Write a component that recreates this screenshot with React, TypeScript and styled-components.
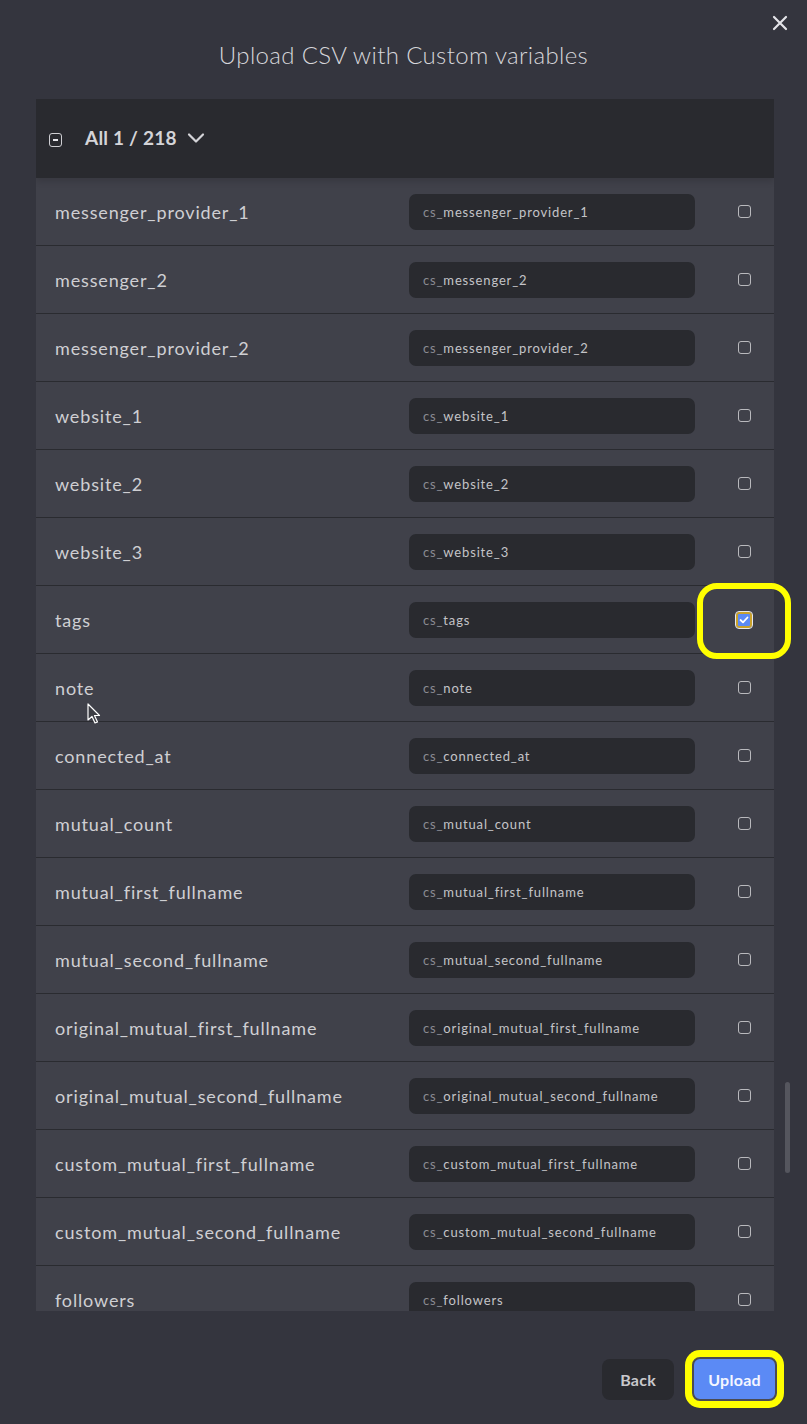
import { createGlobalStyle } from 'styled-components';
import styled from 'styled-components';

const GlobalStyle = createGlobalStyle`
  html, body {
    margin: 0;
    background: #34353e;
  }
  * {
    box-sizing: border-box;
  }
`;

const Modal = styled.div`
  position: relative;
  width: 807px;
  height: 1424px;
  background: #34353e;
  font-family: 'Lato', 'Open Sans', sans-serif;
  display: flex;
  flex-direction: column;
  overflow: hidden;
`;

const CloseButton = styled.button`
  position: absolute;
  top: 12px;
  right: 16px;
  width: 22px;
  height: 22px;
  padding: 0;
  border: none;
  background: transparent;
  cursor: pointer;
  display: flex;
  align-items: center;
  justify-content: center;
`;

const Title = styled.h1`
  margin: 0;
  padding-top: 40px;
  height: 99px;
  text-align: center;
  font-size: 24px;
  font-weight: 300;
  color: #d6d6da;
  letter-spacing: 0.35px;
`;

const Body = styled.div`
  display: flex;
  padding-left: 36px;
`;

const Table = styled.div`
  width: 738px;
  height: 1212px;
  overflow: hidden;
  display: flex;
  flex-direction: column;
`;

const Header = styled.div`
  flex: 0 0 79px;
  background: #292a2f;
  display: flex;
  align-items: center;
  padding-left: 13px;
  padding-bottom: 3px;
  gap: 10px;
  box-shadow: 0 4px 6px rgba(0, 0, 0, 0.12);
  position: relative;
  z-index: 1;
`;

const HeaderLabel = styled.span`
  font-size: 19px;
  font-weight: 700;
  color: #d4d4d8;
  margin-left: 13px;
  letter-spacing: 0.2px;
`;

const MinusBox = styled.span`
  width: 13px;
  height: 14px;
  border: 1.5px solid #cfcfd3;
  border-radius: 3px;
  display: flex;
  align-items: center;
  justify-content: center;
  margin-top: 5px;

  &::after {
    content: '';
    width: 5px;
    height: 2px;
    background: #e6e6ea;
  }
`;

const Row = styled.div`
  flex: 0 0 68px;
  display: grid;
  grid-template-columns: 354px 286px 1fr;
  align-items: center;
  padding-left: 19px;
  background: #40414a;
  border-bottom: 1px solid #2a2b30;
`;

const Label = styled.span`
  font-size: 18px;
  color: #cfcfd3;
  letter-spacing: 0.85px;
  white-space: nowrap;
`;

const Field = styled.div`
  height: 36px;
  border-radius: 7px;
  background: #292a2f;
  display: flex;
  align-items: center;
  padding-left: 14px;
  font-size: 13px;
  color: #c4c4c8;
  letter-spacing: 0.85px;
  white-space: nowrap;
  overflow: hidden;
`;

const Prefix = styled.span`
  color: #8a8b92;
`;

const CheckCell = styled.div`
  display: flex;
  justify-content: flex-end;
  padding-right: 23px;
`;

const Checkbox = styled.span<{ $checked?: boolean }>`
  width: 13px;
  height: 13px;
  border-radius: 3px;
  display: flex;
  align-items: center;
  justify-content: center;
  border: ${(p) => (p.$checked ? '2px solid #c9a12b' : '1.5px solid #b9b9bd')};
  background: ${(p) => (p.$checked ? '#5b8af5' : 'transparent')};
  outline: ${(p) => (p.$checked ? '1px solid #e8e8ec' : 'none')};
  ${(p) => p.$checked && 'width: 16px; height: 16px; margin-right: -1px;'}
`;

const ScrollTrack = styled.div`
  width: 5px;
  margin-left: 11px;
  height: 1212px;
`;

const ScrollThumb = styled.div`
  width: 5px;
  height: 91px;
  border-radius: 3px;
  background: #55565e;
`;

const Footer = styled.div`
  flex: 1;
  display: flex;
  justify-content: flex-end;
  align-items: flex-start;
  padding-top: 46px;
  padding-right: 30px;
  gap: 18px;
`;

const Button = styled.button<{ $primary?: boolean }>`
  height: ${(p) => (p.$primary ? '44px' : '41px')};
  margin-top: ${(p) => (p.$primary ? '0' : '2px')};
  padding: 0 ${(p) => (p.$primary ? '14px' : '18px')};
  border: ${(p) => (p.$primary ? '2px solid #4a4b53' : 'none')};
  border-radius: 8px;
  background: ${(p) => (p.$primary ? '#5b8af5' : '#292a2f')};
  color: ${(p) => (p.$primary ? '#f4f6ff' : '#c8c8cc')};
  font-family: 'Lato', 'Open Sans', sans-serif;
  font-size: 16px;
  font-weight: 700;
  letter-spacing: 0.3px;
  cursor: pointer;
  box-shadow: ${(p) => (p.$primary ? '0 0 0 7px #ffff00' : 'none')};
`;

const Highlight = styled.div<{ $top: number; $left: number; $w: number; $h: number }>`
  position: absolute;
  top: ${(p) => p.$top}px;
  left: ${(p) => p.$left}px;
  width: ${(p) => p.$w}px;
  height: ${(p) => p.$h}px;
  border: 6px solid #ffff00;
  border-radius: 20px;
  pointer-events: none;
`;

const Cursor = styled.svg`
  position: absolute;
  top: 703px;
  left: 87px;
  pointer-events: none;
`;

const rows = [
  'messenger_provider_1',
  'messenger_2',
  'messenger_provider_2',
  'website_1',
  'website_2',
  'website_3',
  'tags',
  'note',
  'connected_at',
  'mutual_count',
  'mutual_first_fullname',
  'mutual_second_fullname',
  'original_mutual_first_fullname',
  'original_mutual_second_fullname',
  'custom_mutual_first_fullname',
  'custom_mutual_second_fullname',
  'followers',
];

export default function App() {
  return (
    <>
      <GlobalStyle />
      <Modal>
        <CloseButton aria-label="Close">
          <svg width="16" height="16" viewBox="0 0 16 16">
            <path d="M2 2 L14 14 M14 2 L2 14" stroke="#e4e4e8" strokeWidth="2.2" strokeLinecap="round" />
          </svg>
        </CloseButton>
        <Title>Upload CSV with Custom variables</Title>
        <Body>
          <Table>
            <Header>
              <MinusBox />
              <HeaderLabel>All 1 / 218</HeaderLabel>
              <svg width="18" height="12" viewBox="0 0 18 12" style={{ marginTop: 1 }}>
                <path d="M2 2.5 L9 9.5 L16 2.5" stroke="#d4d4d8" strokeWidth="2.2" fill="none" strokeLinecap="round" strokeLinejoin="round" />
              </svg>
            </Header>
            {rows.map((name) => (
              <Row key={name}>
                <Label>{name}</Label>
                <Field>
                  <Prefix>cs_</Prefix>
                  {name}
                </Field>
                <CheckCell>
                  <Checkbox $checked={name === 'tags'}>
                    {name === 'tags' && (
                      <svg width="10" height="8" viewBox="0 0 10 8">
                        <path d="M1.5 4 L4 6.3 L8.5 1.5" stroke="#ffffff" strokeWidth="1.8" fill="none" strokeLinecap="round" strokeLinejoin="round" />
                      </svg>
                    )}
                  </Checkbox>
                </CheckCell>
              </Row>
            ))}
          </Table>
          <ScrollTrack>
            <ScrollThumb style={{ marginTop: 983 }} />
          </ScrollTrack>
        </Body>
        <Footer>
          <Button>Back</Button>
          <Button $primary>Upload</Button>
        </Footer>
        <Highlight $top={583} $left={697} $w={94} $h={76} />
        <Cursor width="14" height="22" viewBox="0 0 14 22">
          <path d="M1 1 L1 17 L5 13.5 L8 20 L10.5 19 L7.5 12.5 L12.5 12.5 Z" fill="#3c3d44" stroke="#ffffff" strokeWidth="1.2" strokeLinejoin="round" />
        </Cursor>
      </Modal>
    </>
  );
}
